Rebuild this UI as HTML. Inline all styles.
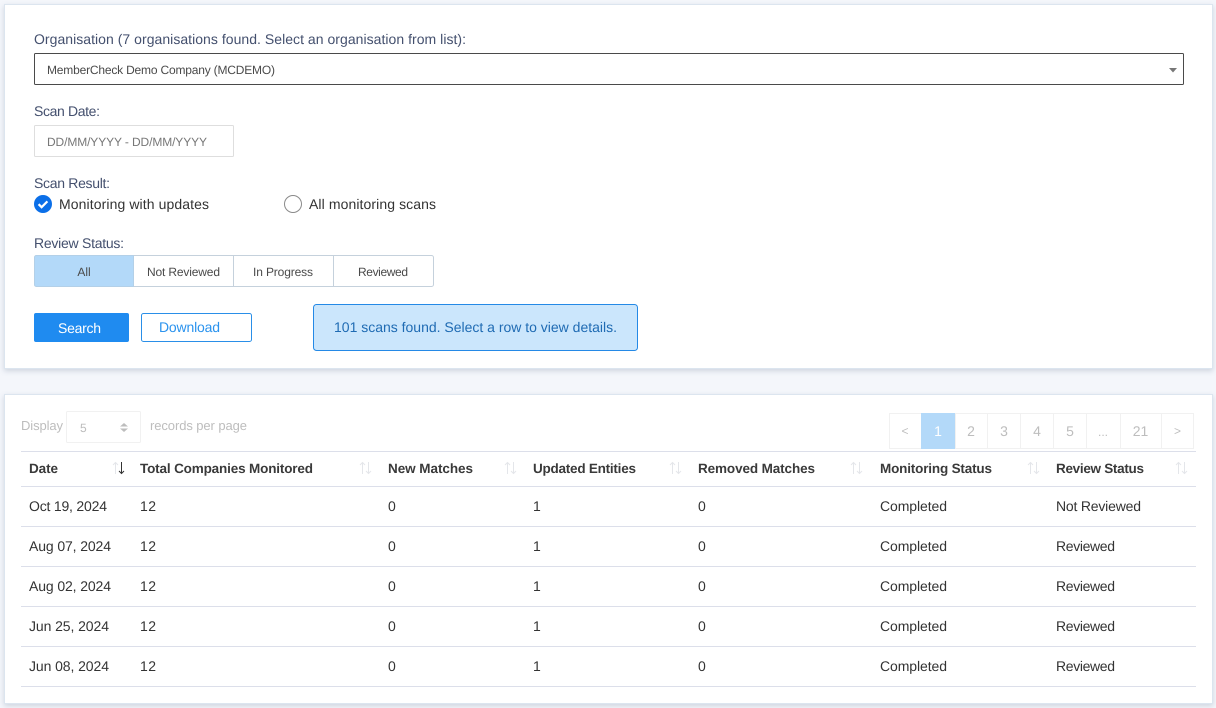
<!DOCTYPE html>
<html lang="en"><head><meta charset="utf-8"><title>Monitoring scans</title>
<style>
html,body{margin:0;padding:0;width:1216px;height:708px;overflow:hidden;background:#f4f6fb}
.card{position:absolute;left:4px;width:1209px;background:#fff;border:1px solid #dce5ef;box-sizing:border-box;box-shadow:0 2px 5px rgba(120,135,160,.3)}
svg{position:absolute;left:0;top:0}
text{font-family:"Liberation Sans",sans-serif;font-size:14px;text-rendering:geometricPrecision}
.l{fill:#44506e}.s{font-size:12px;fill:#4a4a4a}.d{fill:#333}.h{font-weight:bold;fill:#3a3a3a;font-size:13.5px}.g{fill:#bdbdbd}
.c{font-size:12px;fill:#4a4a4a;text-anchor:middle}.p{fill:#bdbdbd;text-anchor:middle}
.up{stroke:#e4e6ea;fill:none;stroke-width:1}
</style></head><body>
<div class="card" style="top:4px;height:365px"></div>
<div class="card" style="top:394px;height:310px"></div>
<svg width="1216" height="708" viewBox="0 0 1216 708" xmlns="http://www.w3.org/2000/svg">
<text class="l" x="34" y="44" textLength="432">Organisation (7 organisations found. Select an organisation from list):</text>
<rect x="34.5" y="53.5" width="1149" height="31" rx="1" fill="#fff" stroke="#4a4a4a"/>
<text class="s" x="47" y="74" textLength="228">MemberCheck Demo Company (MCDEMO)</text>
<path d="M1169 68h8l-4 4.5z" fill="#777"/>
<text class="l" x="34" y="116" textLength="66">Scan Date:</text>
<rect x="34.5" y="125.5" width="199" height="31" rx="1" fill="#fff" stroke="#dedede"/>
<text class="s" style="fill:#777" x="47" y="146" textLength="160">DD/MM/YYYY - DD/MM/YYYY</text>
<text class="l" x="34" y="188" textLength="76">Scan Result:</text>
<circle cx="43" cy="204" r="9" fill="#0b6fe8"/>
<path d="M38.6 204.2l3 3 5.8-5.8" fill="none" stroke="#fff" stroke-width="2.2"/>
<text class="d" x="59" y="209" textLength="150">Monitoring with updates</text>
<circle cx="293" cy="204" r="8.5" fill="#fff" stroke="#8a8a8a"/>
<text class="d" x="309" y="209" textLength="127">All monitoring scans</text>
<text class="l" x="34" y="248" textLength="90">Review Status:</text>
<rect x="34.5" y="255.5" width="399" height="31" rx="2" fill="#fff" stroke="#c5d1dc"/>
<path d="M36.5 255.5h97v31h-97a2 2 0 0 1-2-2v-27a2 2 0 0 1 2-2z" fill="#b3d9f9" stroke="#b3d0e8"/>
<path d="M233.5 255.5v31M333.5 255.5v31" stroke="#c5d1dc"/>
<text class="c" x="84" y="276">All</text>
<text class="c" x="183.5" y="276" textLength="73">Not Reviewed</text>
<text class="c" x="283" y="276" textLength="60">In Progress</text>
<text class="c" x="383" y="276" textLength="50">Reviewed</text>
<rect x="34" y="313" width="95" height="29" rx="2" fill="#1f8bf0"/>
<text x="58" y="333" fill="#fff" textLength="43">Search</text>
<rect x="141.500" y="313.500" width="110" height="28" rx="2" fill="#fff" stroke="#2a8fe8"/>
<text x="159" y="332" fill="#2b93ee" textLength="61">Download</text>
<rect x="313.500" y="304.500" width="324" height="46" rx="3" fill="#cbe6fc" stroke="#2489e6"/>
<text x="334" y="332" fill="#1f6bb3" textLength="283">101 scans found. Select a row to view details.</text>

<text class="g" x="21" y="430" textLength="42" style="font-size:13px">Display</text>
<rect x="66.500" y="411.500" width="74" height="31" rx="1" fill="#fff" stroke="#f1f1f1"/>
<text class="g" x="80" y="432" style="font-size:12px">5</text>
<path d="M120 426.500l4-3.500 4 3.500zM120 428.500l4 3.500 4-3.500z" fill="#bdbdbd"/>
<text class="g" x="150" y="430" textLength="97" style="font-size:13px">records per page</text>

<rect x="889.500" y="413.500" width="304" height="35" fill="#fff" stroke="#f1f1f1"/>
<path d="M921.500 413.500v35M955.500 413.500v35M987.500 413.500v35M1020.500 413.500v35M1053.500 413.500v35M1086.500 413.500v35M1120.500 413.500v35M1161.500 413.500v35" stroke="#f1f1f1"/>
<rect x="921" y="413" width="34" height="36" fill="#b3d9f9"/>
<text class="p" x="905" y="435" style="font-size:12px">&lt;</text>
<text class="p" x="938" y="436" style="fill:#fff">1</text>
<text class="p" x="971" y="436">2</text>
<text class="p" x="1004" y="436">3</text>
<text class="p" x="1037" y="436">4</text>
<text class="p" x="1070" y="436">5</text>
<text class="p" x="1103" y="436" style="font-size:12px">...</text>
<text class="p" x="1140.500" y="436">21</text>
<text class="p" x="1177.500" y="435" style="font-size:12px">&gt;</text>

<path d="M21 451.500H1196M21 486.500H1196M21 526.500H1196M21 566.500H1196M21 606.500H1196M21 646.500H1196M21 686.500H1196" stroke="#dcdfea" fill="none"/>

<text class="h" x="29" y="473" textLength="29">Date</text>
<text class="h" x="140" y="473" textLength="173">Total Companies Monitored</text>
<text class="h" x="388" y="473" textLength="85">New Matches</text>
<text class="h" x="533" y="473" textLength="103">Updated Entities</text>
<text class="h" x="698" y="473" textLength="117">Removed Matches</text>
<text class="h" x="880" y="473" textLength="112">Monitoring Status</text>
<text class="h" x="1056" y="473" textLength="88">Review Status</text>

<g class="up">
<path d="M115.500 474v-11.500m-2.500 2.500l2.500-2.500 2.500 2.500"/>
<path d="M362.500 474v-11.500m-2.500 2.500l2.500-2.500 2.500 2.500M368.500 462v11.500m-2.500-2.500l2.500 2.500 2.500-2.500"/>
<path d="M507.500 474v-11.500m-2.500 2.500l2.500-2.500 2.500 2.500M513.500 462v11.500m-2.500-2.500l2.500 2.500 2.500-2.500"/>
<path d="M672.500 474v-11.500m-2.500 2.500l2.500-2.500 2.500 2.500M678.500 462v11.500m-2.500-2.500l2.500 2.500 2.500-2.500"/>
<path d="M853.500 474v-11.500m-2.500 2.500l2.500-2.500 2.500 2.500M859.500 462v11.500m-2.500-2.500l2.500 2.500 2.500-2.500"/>
<path d="M1030.500 474v-11.500m-2.500 2.500l2.500-2.500 2.500 2.500M1036.500 462v11.500m-2.500-2.500l2.500 2.500 2.500-2.500"/>
<path d="M1178.500 474v-11.500m-2.500 2.500l2.500-2.500 2.500 2.500M1184.500 462v11.500m-2.500-2.500l2.500 2.500 2.500-2.500"/>
</g>
<path d="M121.500 462v11.500m-2.500-2.500l2.500 2.500 2.500-2.500" fill="none" stroke="#333"/>

<text class="d" x="29" y="511" textLength="78">Oct 19, 2024</text>
<text class="d" x="140" y="511" textLength="16">12</text><text class="d" x="388" y="511">0</text><text class="d" x="533" y="511">1</text><text class="d" x="698" y="511">0</text>
<text class="d" x="880" y="511" textLength="67">Completed</text><text class="d" x="1056" y="511" textLength="85">Not Reviewed</text>

<text class="d" x="29" y="551" textLength="82">Aug 07, 2024</text>
<text class="d" x="140" y="551" textLength="16">12</text><text class="d" x="388" y="551">0</text><text class="d" x="533" y="551">1</text><text class="d" x="698" y="551">0</text>
<text class="d" x="880" y="551" textLength="67">Completed</text><text class="d" x="1056" y="551" textLength="59">Reviewed</text>

<text class="d" x="29" y="591" textLength="82">Aug 02, 2024</text>
<text class="d" x="140" y="591" textLength="16">12</text><text class="d" x="388" y="591">0</text><text class="d" x="533" y="591">1</text><text class="d" x="698" y="591">0</text>
<text class="d" x="880" y="591" textLength="67">Completed</text><text class="d" x="1056" y="591" textLength="59">Reviewed</text>

<text class="d" x="29" y="631" textLength="80">Jun 25, 2024</text>
<text class="d" x="140" y="631" textLength="16">12</text><text class="d" x="388" y="631">0</text><text class="d" x="533" y="631">1</text><text class="d" x="698" y="631">0</text>
<text class="d" x="880" y="631" textLength="67">Completed</text><text class="d" x="1056" y="631" textLength="59">Reviewed</text>

<text class="d" x="29" y="671" textLength="80">Jun 08, 2024</text>
<text class="d" x="140" y="671" textLength="16">12</text><text class="d" x="388" y="671">0</text><text class="d" x="533" y="671">1</text><text class="d" x="698" y="671">0</text>
<text class="d" x="880" y="671" textLength="67">Completed</text><text class="d" x="1056" y="671" textLength="59">Reviewed</text>
</svg>
</body></html>
